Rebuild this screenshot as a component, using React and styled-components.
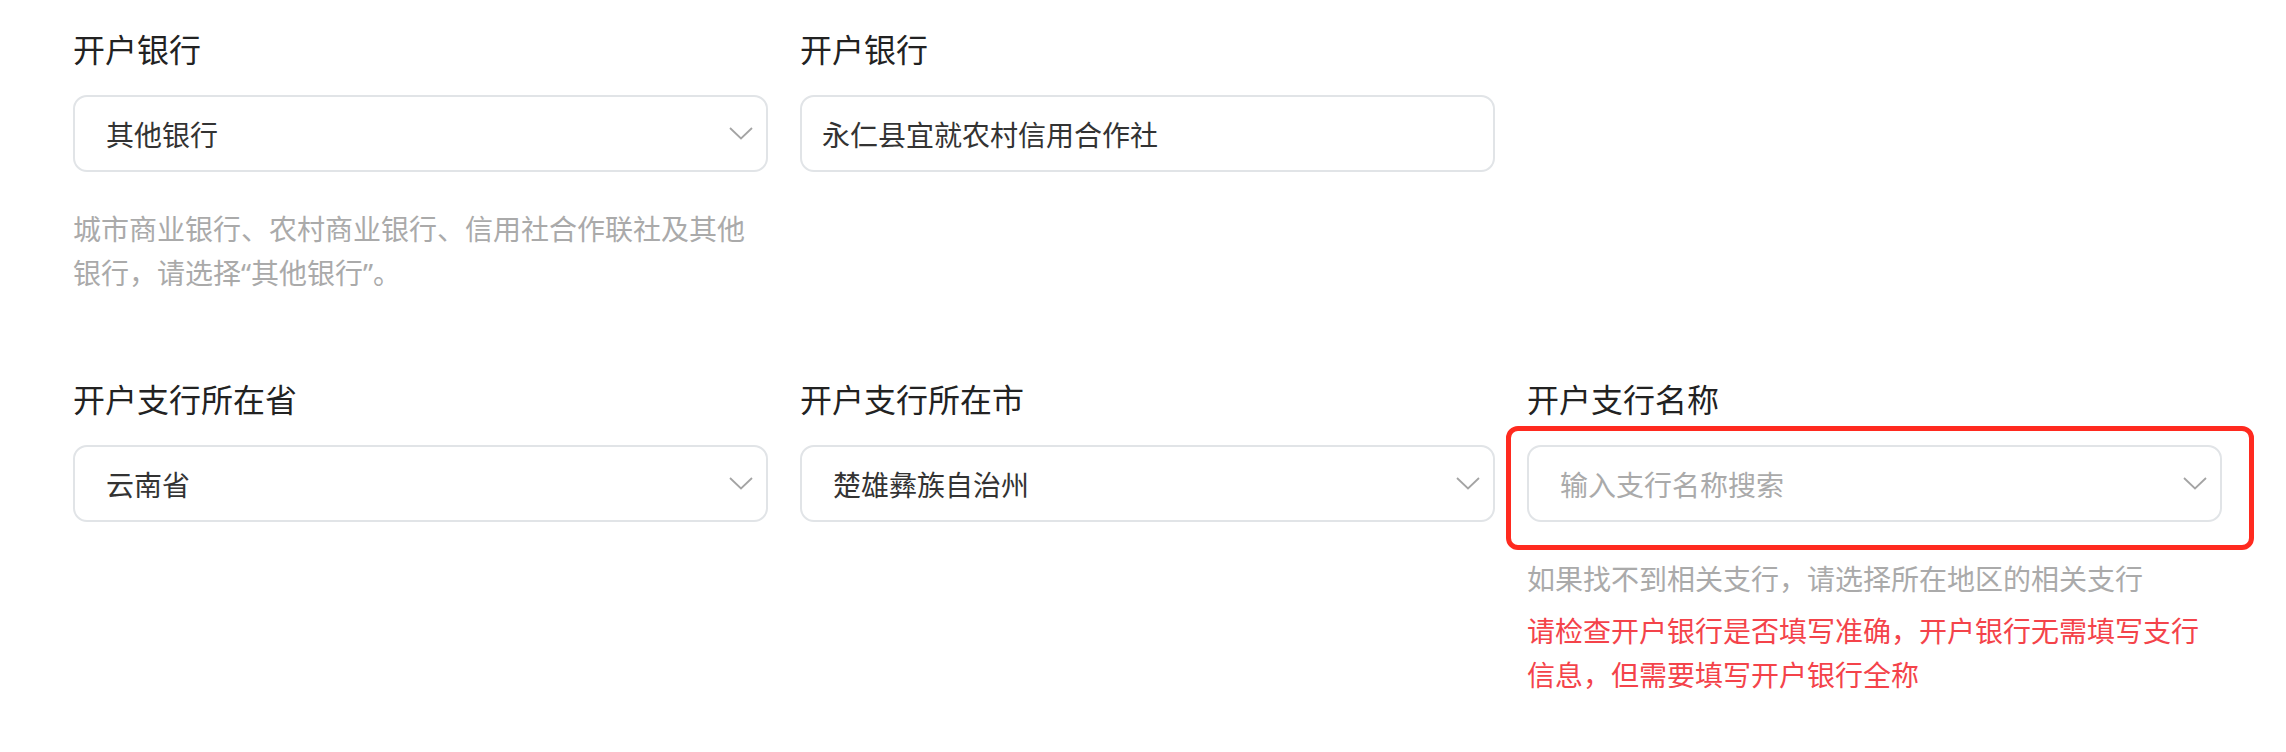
import React from "react";
import styled, { createGlobalStyle } from "styled-components";

const GlobalStyle = createGlobalStyle`
  body {
    margin: 0;
    background: #fff;
    font-family: "Noto Sans", "Noto Sans CJK SC", sans-serif;
  }
`;

const Page = styled.div`
  padding: 28px 0 40px 73px;
`;

const Row = styled.div`
  display: grid;
  grid-template-columns: repeat(3, 695px);
  column-gap: 32px;
  align-items: start;
  & + & {
    margin-top: 83px;
  }
`;

const Field = styled.div`
  display: flex;
  flex-direction: column;
`;

const Label = styled.div`
  font-size: 32px;
  line-height: 44px;
  color: #222;
  margin-bottom: 23px;
`;

const ControlWrap = styled.div`
  position: relative;
`;

const Control = styled.div`
  box-sizing: border-box;
  height: 77px;
  display: flex;
  align-items: center;
  justify-content: space-between;
  border: 2px solid #e1e4e7;
  border-radius: 14px;
  padding: 0 13px 0 ${(p) => (p.$input ? "20px" : "31px")};
  font-size: 28px;
  color: ${(p) => (p.$placeholder ? "#aaa" : "#333")};
  background: #fff;
`;

const Marker = styled.div`
  position: absolute;
  top: -19px;
  left: -21px;
  right: -32px;
  bottom: -28px;
  border: 5px solid #ff2a1f;
  border-radius: 12px;
  pointer-events: none;
`;

const Hint = styled.div`
  margin-top: ${(p) => (p.$tight ? "8px" : "35px")};
  font-size: 28px;
  line-height: 44px;
  color: ${(p) => (p.$error ? "#f4434a" : "#aaa")};
`;

const Chevron = () => (
  <svg width="24" height="13" viewBox="0 0 24 13" fill="none">
    <path d="M1 1 L12 11.5 L23 1" stroke="#a4a4a4" strokeWidth="1.8" />
  </svg>
);

function Select({ value, placeholder, marked }) {
  return (
    <ControlWrap>
      <Control $placeholder={!value}>
        <span>{value || placeholder}</span>
        <Chevron />
      </Control>
      {marked && <Marker />}
    </ControlWrap>
  );
}

export default function App() {
  return (
    <Page>
      <GlobalStyle />
      <Row>
        <Field>
          <Label>开户银行</Label>
          <Select value="其他银行" />
          <Hint>城市商业银行、农村商业银行、信用社合作联社及其他银行，请选择“其他银行”。</Hint>
        </Field>
        <Field>
          <Label>开户银行</Label>
          <ControlWrap>
            <Control $input>永仁县宜就农村信用合作社</Control>
          </ControlWrap>
        </Field>
        <div />
      </Row>
      <Row>
        <Field>
          <Label>开户支行所在省</Label>
          <Select value="云南省" />
        </Field>
        <Field>
          <Label>开户支行所在市</Label>
          <Select value="楚雄彝族自治州" />
        </Field>
        <Field>
          <Label>开户支行名称</Label>
          <Select placeholder="输入支行名称搜索" marked />
          <Hint>如果找不到相关支行，请选择所在地区的相关支行</Hint>
          <Hint $error $tight>
            请检查开户银行是否填写准确，开户银行无需填写支行信息，但需要填写开户银行全称
          </Hint>
        </Field>
      </Row>
    </Page>
  );
}
